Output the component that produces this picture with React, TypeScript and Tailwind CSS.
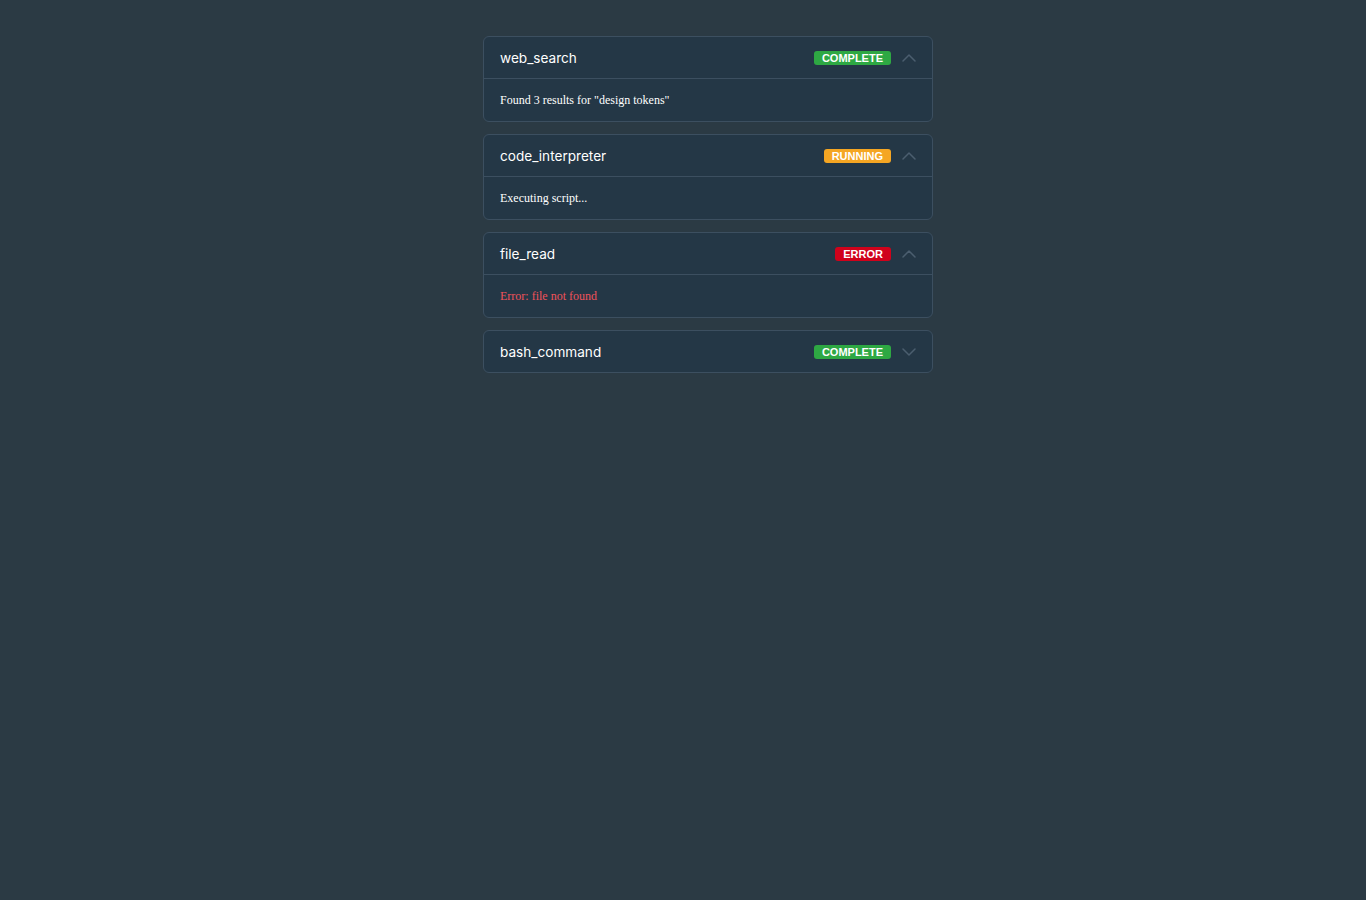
type Status = 'complete' | 'running' | 'error';

interface ToolCall {
  name: string;
  status: Status;
  output?: string;
  open: boolean;
}

const calls: ToolCall[] = [
  { name: 'web_search', status: 'complete', output: 'Found 3 results for "design tokens"', open: true },
  { name: 'code_interpreter', status: 'running', output: 'Executing script...', open: true },
  { name: 'file_read', status: 'error', output: 'Error: file not found', open: true },
  { name: 'bash_command', status: 'complete', open: false },
];

function Badge({ status }: { status: Status }) {
  const cls =
    status === 'complete'
      ? 'bg-[#2ea843]'
      : status === 'running'
      ? 'bg-[#f5a623]'
      : 'bg-[#d0021b]';
  return (
    <span
      className={`${cls} rounded-[3px] px-2 text-[11px] leading-[14px] font-bold uppercase text-white`}
      style={{ fontFamily: '"Liberation Sans", Arial, sans-serif' }}
    >
      {status}
    </span>
  );
}

function Chevron({ up }: { up: boolean }) {
  return (
    <svg width="14" height="14" viewBox="0 0 14 14" fill="none" className="text-[#4b5e6f]">
      <polyline
        points={up ? '1,10 7,4 13,10' : '1,4 7,10 13,4'}
        stroke="currentColor"
        strokeWidth="1.5"
        strokeLinecap="round"
        strokeLinejoin="round"
      />
    </svg>
  );
}

function ToolCard({ call }: { call: ToolCall }) {
  return (
    <div className="rounded-md border border-[#3c4f60] bg-[#243746]">
      {/* Header */}
      <div className="flex h-[41px] items-center justify-between px-4">
        <span
          className="pt-[2px] text-[13.6px] leading-[17px] text-white"
          style={{ fontFamily: 'Inter, "Liberation Sans", Arial, sans-serif' }}
        >
          {call.name}
        </span>
        <div className="flex items-center gap-[11px]">
          <Badge status={call.status} />
          <Chevron up={call.open} />
        </div>
      </div>

      {/* Body */}
      {call.open && (
        <div className="flex h-[43px] items-center border-t border-[#3c4f60] px-4">
          <p
            className={`text-[12px] ${call.status === 'error' ? 'text-[#f0525a]' : 'text-white'}`}
            style={{ fontFamily: '"Liberation Serif", "Times New Roman", serif' }}
          >
            {call.output}
          </p>
        </div>
      )}
    </div>
  );
}

export default function App() {
  return (
    <div className="min-h-[900px] w-full bg-[#2b3a44] pt-9">
      <div className="mx-auto w-[500px] pl-[50px]">
        <div className="flex flex-col gap-3">
          {calls.map((c) => (
            <ToolCard key={c.name} call={c} />
          ))}
        </div>
      </div>
    </div>
  );
}
